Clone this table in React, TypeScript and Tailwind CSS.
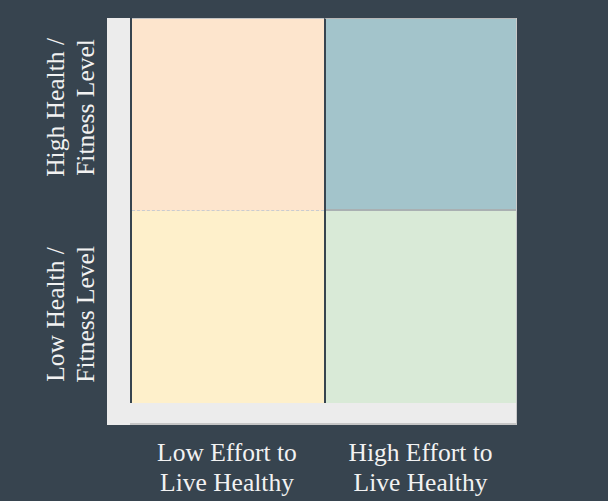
import React from 'react';

const serif = { fontFamily: '"Liberation Serif", "DejaVu Serif", serif' };

export default function App() {
  return (
    <div className="w-[608px] h-[501px] bg-[#37444f] text-[#f2f2f2] flex overflow-hidden" style={serif}>
      {/* y axis labels */}
      <div className="w-[107px] pl-[41px] flex flex-col">
        <div className="mt-[18px] h-[178px] flex items-center">
          <div className="[writing-mode:vertical-rl] rotate-180 text-[25.5px] leading-[30px] text-center">
            High Health /<br />Fitness Level
          </div>
        </div>
        <div className="h-[236px] flex items-center">
          <div className="[writing-mode:vertical-rl] rotate-180 text-[25.5px] leading-[30px] text-center">
            Low Health /<br />Fitness Level
          </div>
        </div>
      </div>

      <div className="flex flex-col">
        {/* chart panel */}
        <div className="mt-[18px] w-[410px] h-[407px] bg-[#ececec] flex">
          <div className="w-[23px]" />
          <div className="flex-1 flex flex-col border-r border-[#c9c9c9]">
            <div className="h-[385px] grid grid-cols-2 grid-rows-2 border-l-2 border-[#37444f]">
              <div className="bg-[#fde5cd] border-t border-[#c4c4c4] flex flex-col">
                <div className="flex-1 border-b border-dashed border-[#c9ccd0]" />
              </div>
              <div className="bg-[#a3c4cb] border-t border-[#b8b8b8] border-l-2 border-l-[#37444f] flex flex-col">
                <div className="flex-1 border-b-2 border-[#a9b0b2]" />
              </div>
              <div className="bg-[#fef0cb]" />
              <div className="bg-[#d9ead7] border-l-2 border-[#37444f]" />
            </div>
            <div className="flex-1 border-b-2 border-[#c6c6c6]" />
          </div>
        </div>

        {/* x axis labels */}
        <div className="mt-[13px] flex pl-[23px]">
          <div className="w-[194px] text-center text-[25.5px] leading-[30px]">
            Low Effort to<br />Live Healthy
          </div>
          <div className="w-[193px] text-center text-[25.5px] leading-[30px]">
            High Effort to<br />Live Healthy
          </div>
        </div>
      </div>
    </div>
  );
}
